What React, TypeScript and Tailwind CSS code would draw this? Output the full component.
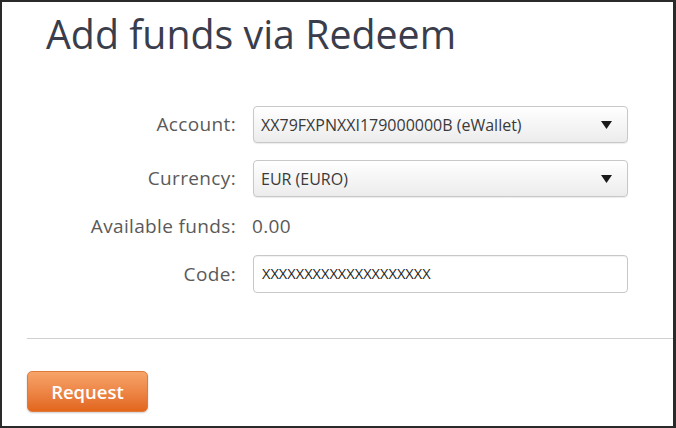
import React from "react";

function Arrow() {
  return (
    <svg width="11" height="8" viewBox="0 0 11 8" className="shrink-0">
      <path d="M0 0 L11 0 L5.5 8 Z" fill="#1a1a1a" />
    </svg>
  );
}

function SelectBox({ text }: { text: string }) {
  return (
    <div className="h-[37px] w-[375px] rounded-[4px] border border-[#c8c8c8] bg-gradient-to-b from-[#ffffff] to-[#ececec] flex items-center justify-between pl-[7px] pr-[15px] shadow-[0_1px_1px_rgba(0,0,0,0.08)]">
      <span className="text-[16px] text-[#3a3a3a]">{text}</span>
      <Arrow />
    </div>
  );
}

const label = "text-right text-[19px] tracking-[0.35px] text-[#5a5a5a]";

export default function App() {
  return (
    <div
      className="w-[676px] h-[428px] bg-white border-t-2 border-l-2 border-b-2 border-r-[3px] border-[#2a2a2a] flex flex-col"
      style={{ fontFamily: '"Open Sans", "Noto Sans", sans-serif' }}
    >
      <h1 className="ml-[44px] mt-[4px] text-[39.3px] leading-[56px] text-[#3a3d4c] font-normal">
        Add funds via Redeem
      </h1>
      <div className="ml-[25px] mt-[44px] grid grid-cols-[209px_375px] gap-x-[17px] gap-y-[17px] items-center">
        <div className={label}>Account:</div>
        <SelectBox text="XX79FXPNXXI179000000B (eWallet)" />
        <div className={label}>Currency:</div>
        <SelectBox text="EUR (EURO)" />
        <div className={label + " h-[24px] leading-[24px]"}>Available funds:</div>
        <div className="text-[19px] tracking-[0.35px] text-[#5a5a5a] h-[24px] leading-[24px] -ml-[1px]">0.00</div>
        <div className={label}>Code:</div>
        <div className="h-[38px] w-[375px] rounded-[4px] border border-[#c8c8c8] bg-white flex items-center pl-[8px] shadow-[inset_0_1px_1px_rgba(0,0,0,0.06)]">
          <span className="text-[14.6px] text-[#222]">XXXXXXXXXXXXXXXXXXXX</span>
        </div>
      </div>
      <div className="ml-[25px] mt-[45px] h-px bg-[#d0d0d0]" />
      <div className="ml-[25px] mt-[32px]">
        <button className="w-[121px] h-[41px] rounded-[5px] border border-[#e07a3a] bg-gradient-to-b from-[#f6a469] to-[#e2661a] text-white text-[18.5px] font-semibold shadow-[0_1px_2px_rgba(0,0,0,0.2)]">
          Request
        </button>
      </div>
    </div>
  );
}
